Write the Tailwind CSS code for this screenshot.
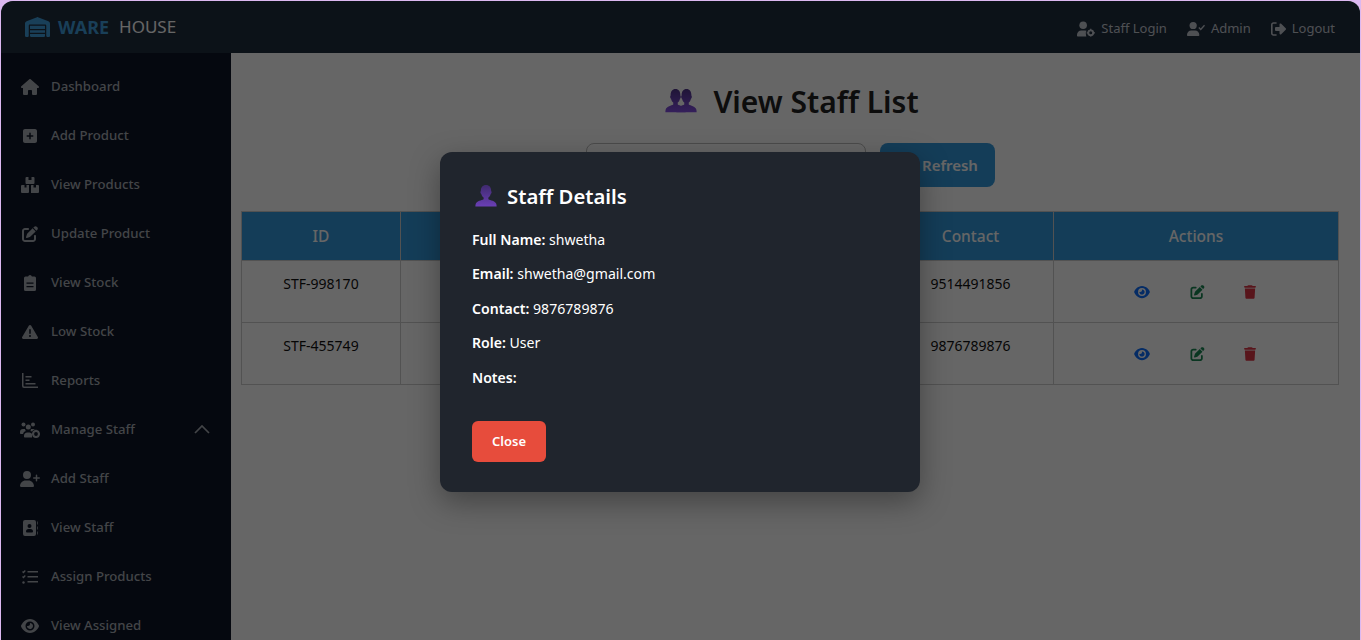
<!DOCTYPE html>
<html lang="en">
<head>
    <meta charset="UTF-8">
    <meta name="viewport" content="width=device-width, initial-scale=1.0">
    <title>Warehouse - View Staff</title>
    <script src="https://cdn.jsdelivr.net/npm/@tailwindcss/browser@4"></script>
</head>
<body class="h-screen overflow-hidden bg-[#dcb8f0] px-px pt-px font-['Noto_Sans',sans-serif]">
    <!-- Icon sprite -->
    <svg class="absolute h-0 w-0">
        <defs><linearGradient id="bust" x1="0" y1="0" x2="0" y2="1"><stop offset="0" stop-color="#3f2a6e"/><stop offset="1" stop-color="#6a3fb5"/></linearGradient></defs>
        <symbol id="i-warehouse" viewBox="0 0 640 512"><path fill="currentColor" d="M0 488V171.3c0-26.2 15.9-49.7 40.2-59.4L308.1 4.8c7.6-3.1 16.1-3.1 23.8 0L599.8 111.9c24.3 9.7 40.2 33.3 40.2 59.4V488c0 13.3-10.7 24-24 24H568c-13.3 0-24-10.7-24-24V224c0-17.7-14.3-32-32-32H128c-17.7 0-32 14.3-32 32V488c0 13.3-10.7 24-24 24H24c-13.3 0-24-10.7-24-24zm488 24l-336 0c-13.3 0-24-10.7-24-24V432H512l0 56c0 13.3-10.7 24-24 24zM128 400V336H512v64H128zm0-96V224H512v80H128z"/></symbol>
        <symbol id="i-house" viewBox="0 0 576 512"><path fill="currentColor" d="M575.8 255.5c0 18-15 32.1-32 32.1h-32l.7 160.2c0 2.7-.2 5.4-.5 8.1V472c0 22.1-17.9 40-40 40H456c-1.1 0-2.2 0-3.3-.1c-1.4 .1-2.8 .1-4.2 .1H416 392c-22.1 0-40-17.9-40-40V448 384c0-17.7-14.3-32-32-32H256c-17.7 0-32 14.3-32 32v64 24c0 22.1-17.9 40-40 40H160 128.1c-1.5 0-3-.1-4.5-.2c-1.2 .1-2.4 .2-3.6 .2H104c-22.1 0-40-17.9-40-40V360c0-.9 0-1.9 .1-2.8V287.6H32c-18 0-32-14-32-32.1c0-9 3-17 10-24L266.4 8c7-7 15-8 22-8s15 2 21 7L564.8 231.5c8 7 12 15 11 24z"/></symbol>
        <symbol id="i-plus" viewBox="0 0 448 512"><path fill="currentColor" d="M64 32C28.7 32 0 60.7 0 96V416c0 35.3 28.7 64 64 64H384c35.3 0 64-28.7 64-64V96c0-35.3-28.7-64-64-64H64zM200 344V280H136c-13.3 0-24-10.7-24-24s10.7-24 24-24h64V168c0-13.3 10.7-24 24-24s24 10.7 24 24v64h64c13.3 0 24 10.7 24 24s-10.7 24-24 24H248v64c0 13.3-10.7 24-24 24s-24-10.7-24-24z"/></symbol>
        <symbol id="i-boxes" viewBox="0 0 18 16"><path fill="currentColor" d="M5.500 0h2v3h3V0h2a1 1 0 0 1 1 1v5a1 1 0 0 1-1 1h-7a1 1 0 0 1-1-1V1a1 1 0 0 1 1-1zM1 8h2.500v2.500h2V8H8v7a1 1 0 0 1-1 1H1a1 1 0 0 1-1-1V9a1 1 0 0 1 1-1zm9.500 0h2v2.500h2.500V8H17a1 1 0 0 1 1 1v6a1 1 0 0 1-1 1h-6.500a.5.500 0 0 1-.5-.5v-7a.5.500 0 0 1 .5-.5z"/></symbol>
        <symbol id="i-pen" viewBox="0 0 512 512"><path fill="currentColor" d="M471.6 21.7c-21.9-21.9-57.3-21.9-79.2 0L362.3 51.7l97.9 97.9 30.1-30.1c21.9-21.9 21.9-57.3 0-79.2L471.6 21.7zm-299.2 220c-6.1 6.1-10.8 13.6-13.5 21.9l-29.6 88.8c-2.9 8.6-.6 18.1 5.8 24.6s15.9 8.7 24.6 5.8l88.8-29.6c8.2-2.7 15.7-7.4 21.9-13.5L437.7 172.3 339.7 74.3 172.4 241.7zM96 64C43 64 0 107 0 160V416c0 53 43 96 96 96H352c53 0 96-43 96-96V320c0-17.7-14.3-32-32-32s-32 14.3-32 32v96c0 17.7-14.3 32-32 32H96c-17.7 0-32-14.3-32-32V160c0-17.700 14.3-32 32-32h96c17.7 0 32-14.3 32-32s-14.3-32-32-32H96z"/></symbol>
        <symbol id="i-clipboard" viewBox="0 0 12 16"><path fill="currentColor" fill-rule="evenodd" d="M6 0a2 2 0 0 1 1.900 1.500H10.500A1.500 1.500 0 0 1 12 3v11.500a1.500 1.500 0 0 1-1.500 1.500h-9A1.500 1.500 0 0 1 0 14.500V3a1.500 1.500 0 0 1 1.500-1.500h2.600A2 2 0 0 1 6 0zM2.500 7.500v1.300h7V7.500zm0 3.500v1.300h7V11z"/></symbol>
        <symbol id="i-warning" viewBox="0 0 512 512"><path fill="currentColor" d="M256 32c14.2 0 27.3 7.5 34.5 19.8l216 368c7.3 12.4 7.3 27.7 .2 40.1S486.3 480 472 480H40c-14.3 0-27.6-7.7-34.7-20.1s-7-27.8 .2-40.1l216-368C228.7 39.5 241.8 32 256 32zm0 128c-13.3 0-24 10.7-24 24V296c0 13.3 10.7 24 24 24s24-10.7 24-24V184c0-13.3-10.7-24-24-24zm32 224a32 32 0 1 0 -64 0 32 32 0 1 0 64 0z"/></symbol>
        <symbol id="i-chart" viewBox="0 0 16 15"><path fill="currentColor" d="M0 0h1.500v12.700a.8.800 0 0 0 .8.800H16V15H2a2 2 0 0 1-2-2zM3.500 3h6v1.500h-6zm0 3.500h4V8h-4zm0 3.500h10v1.500h-10z"/></symbol>
        <symbol id="i-users-gear" viewBox="0 0 20 16"><g fill="currentColor"><circle cx="3.500" cy="2.500" r="2"/><circle cx="13" cy="2.500" r="2"/><circle cx="8.300" cy="5" r="2.500"/><path d="M0 10a3 3 0 0 1 3-3h2a4 4 0 0 0 .8 2A4 4 0 0 0 3 12H.8A.8.800 0 0 1 0 11.200zM4 14a3.500 3.500 0 0 1 3.500-3.500h2A3.500 3.500 0 0 1 12 12v3.500H4.800a.8.800 0 0 1-.8-.8z"/><path d="M11 7h3a3 3 0 0 1 1 .2A5 5 0 0 0 12 9.500a4 4 0 0 0-1.500-.5z"/><circle cx="16" cy="12" r="2.900" fill="none" stroke="currentColor" stroke-width="2"/><path d="M15.200 7.700h1.600v1.500h-1.600zm0 7.200h1.600v1.100h-1.600zm-3.400-3.700h1.500v1.600h-1.500zm6.900 0h1.300v1.600h-1.300z"/></g></symbol>
        <symbol id="i-user-plus" viewBox="0 0 640 512"><path fill="currentColor" d="M224 256A128 128 0 1 0 224 0a128 128 0 1 0 0 256zm-45.700 48C79.800 304 0 383.800 0 482.300C0 498.700 13.300 512 29.700 512H418.300c16.400 0 29.700-13.300 29.700-29.700C448 383.800 368.200 304 269.700 304H178.300zM504 312V248H440c-13.300 0-24-10.700-24-24s10.700-24 24-24h64V136c0-13.300 10.700-24 24-24s24 10.700 24 24v64h64c13.300 0 24 10.700 24 24s-10.700 24-24 24H552v64c0 13.300-10.700 24-24 24s-24-10.700-24-24z"/></symbol>
        <symbol id="i-address" viewBox="0 0 15 16"><path fill="currentColor" fill-rule="evenodd" d="M2 0h9a2 2 0 0 1 2 2v12a2 2 0 0 1-2 2H2a2 2 0 0 1-2-2V2a2 2 0 0 1 2-2zm4.500 4a2 2 0 1 0 0 4 2 2 0 0 0 0-4zM3 11.500a1 1 0 0 0 1 1h5a1 1 0 0 0 1-1A2.500 2.500 0 0 0 7.500 9h-2A2.500 2.500 0 0 0 3 11.500z"/><path fill="currentColor" d="M14.300 1.500h.7v3h-.7zm0 5h.7v3h-.7zm0 5h.7v3h-.7z"/></symbol>
        <symbol id="i-list-check" viewBox="0 0 16 14"><path fill="none" stroke="currentColor" stroke-width="1.300" d="M.5 1.500l1 1 1.800-2M.5 6.500l1 1 1.800-2"/><circle cx="1.500" cy="12.500" r="1.200" fill="currentColor"/><path fill="currentColor" d="M5.500 1h10.500v1.400H5.500zm0 5h10.500v1.400H5.500zm0 5h10.500v1.400H5.500z"/></symbol>
        <symbol id="i-eye" viewBox="0 0 576 512"><path fill="currentColor" d="M288 32c-80.800 0-145.500 36.800-192.600 80.600C48.600 156 17.300 208 2.500 243.700c-3.300 7.900-3.300 16.700 0 24.600C17.300 304 48.600 356 95.400 399.400C142.500 443.200 207.200 480 288 480s145.500-36.800 192.600-80.600c46.800-43.500 78.100-95.400 93-131.100c3.300-7.900 3.300-16.700 0-24.600c-14.900-35.700-46.200-87.700-93-131.100C433.500 68.800 368.800 32 288 32zM144 256a144 144 0 1 1 288 0 144 144 0 1 1 -288 0zm144-64c0 35.300-28.700 64-64 64c-7.100 0-13.900-1.200-20.300-3.300c-5.500-1.800-11.900 1.600-11.700 7.400c.3 6.900 1.300 13.800 3.200 20.700c13.700 51.200 66.400 81.600 117.600 67.900s81.600-66.400 67.900-117.600c-11.100-41.500-47.800-69.400-88.600-71.100c-5.800-.2-9.200 6.100-7.400 11.700c2.100 6.400 3.300 13.200 3.300 20.300z"/></symbol>
        <symbol id="i-trash" viewBox="0 0 448 512"><path fill="currentColor" d="M135.200 17.700L128 32H32C14.300 32 0 46.300 0 64S14.300 96 32 96H416c17.700 0 32-14.300 32-32s-14.300-32-32-32H320l-7.200-14.300C307.400 6.800 296.300 0 284.200 0H163.800c-12.100 0-23.200 6.800-28.600 17.700zM416 128H32L53.200 467c1.600 25.300 22.600 45 47.900 45H346.900c25.300 0 46.300-19.700 47.900-45L416 128z"/></symbol>
        <symbol id="i-user-gear" viewBox="0 0 19 16"><g fill="currentColor"><circle cx="6.500" cy="4" r="4"/><path d="M4.500 9.500h4a4.500 4.500 0 0 1 1.500.3A5 5 0 0 0 9.500 14c0 .7.100 1.400.4 2H.8A.8.800 0 0 1 0 15.200V14a4.500 4.500 0 0 1 4.500-4.500z"/><circle cx="14.500" cy="12" r="2.600" fill="none" stroke="currentColor" stroke-width="2"/><path d="M13.800 7.800h1.400v1.500h-1.400zm0 7h1.400V16h-1.400zm-3.600-3.500h1.500v1.400h-1.500zm7 0H19v1.400h-1.800z"/></g></symbol>
        <symbol id="i-user-check" viewBox="0 0 19 15"><g fill="currentColor"><circle cx="6.500" cy="3.800" r="3.800"/><path d="M4.500 9h4A4.500 4.500 0 0 1 13 13.500v.7a.8.800 0 0 1-.8.800H.8a.8.800 0 0 1-.8-.8v-.7A4.500 4.500 0 0 1 4.500 9z"/></g><path fill="none" stroke="currentColor" stroke-width="1.400" d="M12.500 6l2 2 4-4.500"/></symbol>
        <symbol id="i-logout" viewBox="0 0 15 14"><path fill="currentColor" d="M8.500 2.500a1 1 0 0 1 1.700-.7l4.500 4.500a1 1 0 0 1 0 1.400l-4.500 4.500a1 1 0 0 1-1.700-.7V9H5a1 1 0 0 1-1-1V6a1 1 0 0 1 1-1h3.500z"/><path fill="none" stroke="currentColor" stroke-width="1.600" stroke-linecap="round" d="M5 1H2.500A1.700 1.700 0 0 0 .8 2.700v8.600A1.700 1.700 0 0 0 2.500 13H5"/></symbol>
        <symbol id="i-bust" viewBox="2 3 28 29" preserveAspectRatio="none"><path fill="url(#bust)" d="M16 3c4.200 0 6.500 3 6.500 7 0 1.200.8 1.300.6 2.600-.2 1-.8 1.400-1.100 1.700-.6 2.200-1.800 3.700-3 4.500v2.200c2.500 1.400 8.500 2 10 5.500.4 1 .5 2.200.5 3.500H2.500c0-1.300.1-2.500.5-3.500 1.500-3.500 7.500-4.100 10-5.500v-2.200c-1.200-.8-2.400-2.300-3-4.500-.3-.3-.9-.7-1.100-1.700-.2-1.300.6-1.400.6-2.600 0-4 2.300-7 6.500-7z"/></symbol>
    </svg>

    <div class="relative h-[639px] overflow-hidden rounded-t-xl bg-white">
        <!-- Navbar -->
        <header class="flex h-[52px] items-center justify-between bg-[#202d3e] pl-6 pr-[25px] pt-1">
            <div class="-mt-1 flex items-center text-[17px]">
                <svg class="mr-2 h-5 w-[25px] text-[#3f9ddb]"><use href="#i-warehouse"/></svg>
                <span class="text-lg font-bold text-[#3f9ddb]">WARE</span>
                <span class="ml-[10px] text-white">HOUSE</span>
            </div>
            <nav class="flex items-center gap-5 text-[13px] text-[#c4c8d0]">
                <a class="flex items-center gap-1.5"><svg class="h-4 w-[18px]"><use href="#i-user-gear"/></svg>Staff Login</a>
                <a class="flex items-center gap-1.5"><svg class="h-4 w-[18px]"><use href="#i-user-check"/></svg>Admin</a>
                <a class="flex items-center gap-1.5"><svg class="h-[14px] w-[15px]"><use href="#i-logout"/></svg>Logout</a>
            </nav>
        </header>

        <div class="flex">
            <!-- Sidebar -->
            <aside class="h-[587px] w-[230px] shrink-0 bg-[#0d1526] pt-[9px] text-[13.200px] font-medium text-[#a8acb4]">
                <a class="flex h-[49px] items-center pl-5"><span class="mr-3 flex w-[18px] justify-center"><svg class="h-4 w-[18px]"><use href="#i-house"/></svg></span>Dashboard</a>
                <a class="flex h-[49px] items-center pl-5"><span class="mr-3 flex w-[18px] justify-center"><svg class="h-4 w-[14px]"><use href="#i-plus"/></svg></span>Add Product</a>
                <a class="flex h-[49px] items-center pl-5"><span class="mr-3 flex w-[18px] justify-center"><svg class="h-4 w-[18px]"><use href="#i-boxes"/></svg></span>View Products</a>
                <a class="flex h-[49px] items-center pl-5"><span class="mr-3 flex w-[18px] justify-center"><svg class="h-4 w-4"><use href="#i-pen"/></svg></span>Update Product</a>
                <a class="flex h-[49px] items-center pl-5"><span class="mr-3 flex w-[18px] justify-center"><svg class="h-4 w-3"><use href="#i-clipboard"/></svg></span>View Stock</a>
                <a class="flex h-[49px] items-center pl-5"><span class="mr-3 flex w-[18px] justify-center"><svg class="h-4 w-4"><use href="#i-warning"/></svg></span>Low Stock</a>
                <a class="flex h-[49px] items-center pl-5"><span class="mr-3 flex w-[18px] justify-center"><svg class="h-[15px] w-4"><use href="#i-chart"/></svg></span>Reports</a>
                <a class="flex h-[49px] items-center pl-5 pr-[21px]"><span class="mr-3 flex w-[18px] justify-center"><svg class="h-4 w-5 shrink-0"><use href="#i-users-gear"/></svg></span>Manage Staff
                    <svg class="ml-auto h-[9px] w-4" viewBox="0 0 16 9"><path fill="none" stroke="currentColor" stroke-width="1.700" d="M1 8l7-7 7 7"/></svg>
                </a>
                <a class="flex h-[49px] items-center pl-5"><span class="mr-3 flex w-[18px] justify-center"><svg class="h-4 w-5 shrink-0"><use href="#i-user-plus"/></svg></span>Add Staff</a>
                <a class="flex h-[49px] items-center pl-5"><span class="mr-3 flex w-[18px] justify-center"><svg class="h-4 w-[15px]"><use href="#i-address"/></svg></span>View Staff</a>
                <a class="flex h-[49px] items-center pl-5"><span class="mr-3 flex w-[18px] justify-center"><svg class="h-[14px] w-4"><use href="#i-list-check"/></svg></span>Assign Products</a>
                <a class="flex h-[49px] items-center pl-5"><span class="mr-3 flex w-[18px] justify-center"><svg class="h-4 w-[18px]"><use href="#i-eye"/></svg></span>View Assigned</a>
            </aside>

            <!-- Main -->
            <main class="min-w-0 flex-1 pl-[10px] pr-5 pt-[25px]">
                <h1 class="flex h-[46px] items-center justify-center gap-4 pl-[3px] text-[30px] font-semibold text-[#222]">
                    <span class="flex brightness-125">
                        <svg class="h-[25px] w-[21px]"><use href="#i-bust"/></svg>
                        <svg class="-ml-[10px] h-[25px] w-[21px]"><use href="#i-bust"/></svg>
                    </span>
                    <span>View Staff List</span>
                </h1>
                <div class="mt-[19px] flex justify-center gap-[14px]">
                    <input type="text" class="h-11 w-[280px] rounded-lg border border-[#bbb] bg-white px-3 text-sm">
                    <button class="h-11 w-[115px] rounded-lg bg-[#3498db] pl-[42px] text-left text-[15px] font-semibold text-white">Refresh</button>
                </div>
                <table class="mt-6 w-[1098px] table-fixed border-collapse text-sm text-[#111]">
                    <thead>
                        <tr class="h-[49px] bg-[#3498db] text-[15.500px] text-white">
                            <th class="w-[159px] border border-[#ccc] font-medium">ID</th>
                            <th class="w-[160px] border border-[#ccc] font-medium"></th>
                            <th class="w-[327px] border border-[#ccc] font-medium"></th>
                            <th class="w-[166px] border border-[#ccc] font-medium">Contact</th>
                            <th class="border border-[#ccc] font-medium">Actions</th>
                        </tr>
                    </thead>
                    <tbody>
                        <tr class="h-[62px] text-center">
                            <td class="border border-[#ccc] pb-[15px] pt-[13px] align-top">STF-998170</td>
                            <td class="border border-[#ccc]"></td>
                            <td class="border border-[#ccc]"></td>
                            <td class="border border-[#ccc] pb-[15px] pt-[13px] align-top">9514491856</td>
                            <td class="border border-[#ccc]">
                                <div class="flex items-center justify-center gap-[39.500px] pr-0.5">
                                    <svg class="h-[14px] w-4 text-[#0d6efd]"><use href="#i-eye"/></svg>
                                    <svg class="h-[14px] w-[15px] text-[#198754]"><use href="#i-pen"/></svg>
                                    <svg class="h-[14px] w-3 text-[#dc3545]"><use href="#i-trash"/></svg>
                                </div>
                            </td>
                        </tr>
                        <tr class="h-[62px] text-center">
                            <td class="border border-[#ccc] pb-[15px] pt-[13px] align-top">STF-455749</td>
                            <td class="border border-[#ccc]"></td>
                            <td class="border border-[#ccc]"></td>
                            <td class="border border-[#ccc] pb-[15px] pt-[13px] align-top">9876789876</td>
                            <td class="border border-[#ccc]">
                                <div class="flex items-center justify-center gap-[39.500px] pr-0.5">
                                    <svg class="h-[14px] w-4 text-[#0d6efd]"><use href="#i-eye"/></svg>
                                    <svg class="h-[14px] w-[15px] text-[#198754]"><use href="#i-pen"/></svg>
                                    <svg class="h-[14px] w-3 text-[#dc3545]"><use href="#i-trash"/></svg>
                                </div>
                            </td>
                        </tr>
                    </tbody>
                </table>
            </main>
        </div>

        <!-- Staff details modal -->
        <div class="absolute inset-0 flex items-center justify-center bg-black/60 pr-px pt-[3px]">
            <div class="h-[340px] w-[480px] rounded-xl bg-[#20252d] px-8 pt-[26px] text-[14.100px] text-white shadow-[0_10px_30px_rgba(0,0,0,0.35)]">
                <h2 class="flex h-9 items-center text-[20.300px] font-semibold">
                    <svg class="ml-[3px] mr-[10px] h-[23px] w-[22px]"><use href="#i-bust"/></svg>Staff Details
                </h2>
                <div class="mt-4 space-y-[14.400px] leading-5">
                    <p><b class="font-semibold">Full Name:</b> shwetha</p>
                    <p><b class="font-semibold">Email:</b> shwetha@gmail.com</p>
                    <p><b class="font-semibold">Contact:</b> 9876789876</p>
                    <p><b class="font-semibold">Role:</b> User</p>
                    <p><b class="font-semibold">Notes:</b></p>
                </div>
                <button class="mt-[33px] h-[41px] w-[74px] rounded-md bg-[#e74c3c] pt-0.5 text-[13px] font-semibold text-white">Close</button>
            </div>
        </div>
    </div>
</body>
</html>
